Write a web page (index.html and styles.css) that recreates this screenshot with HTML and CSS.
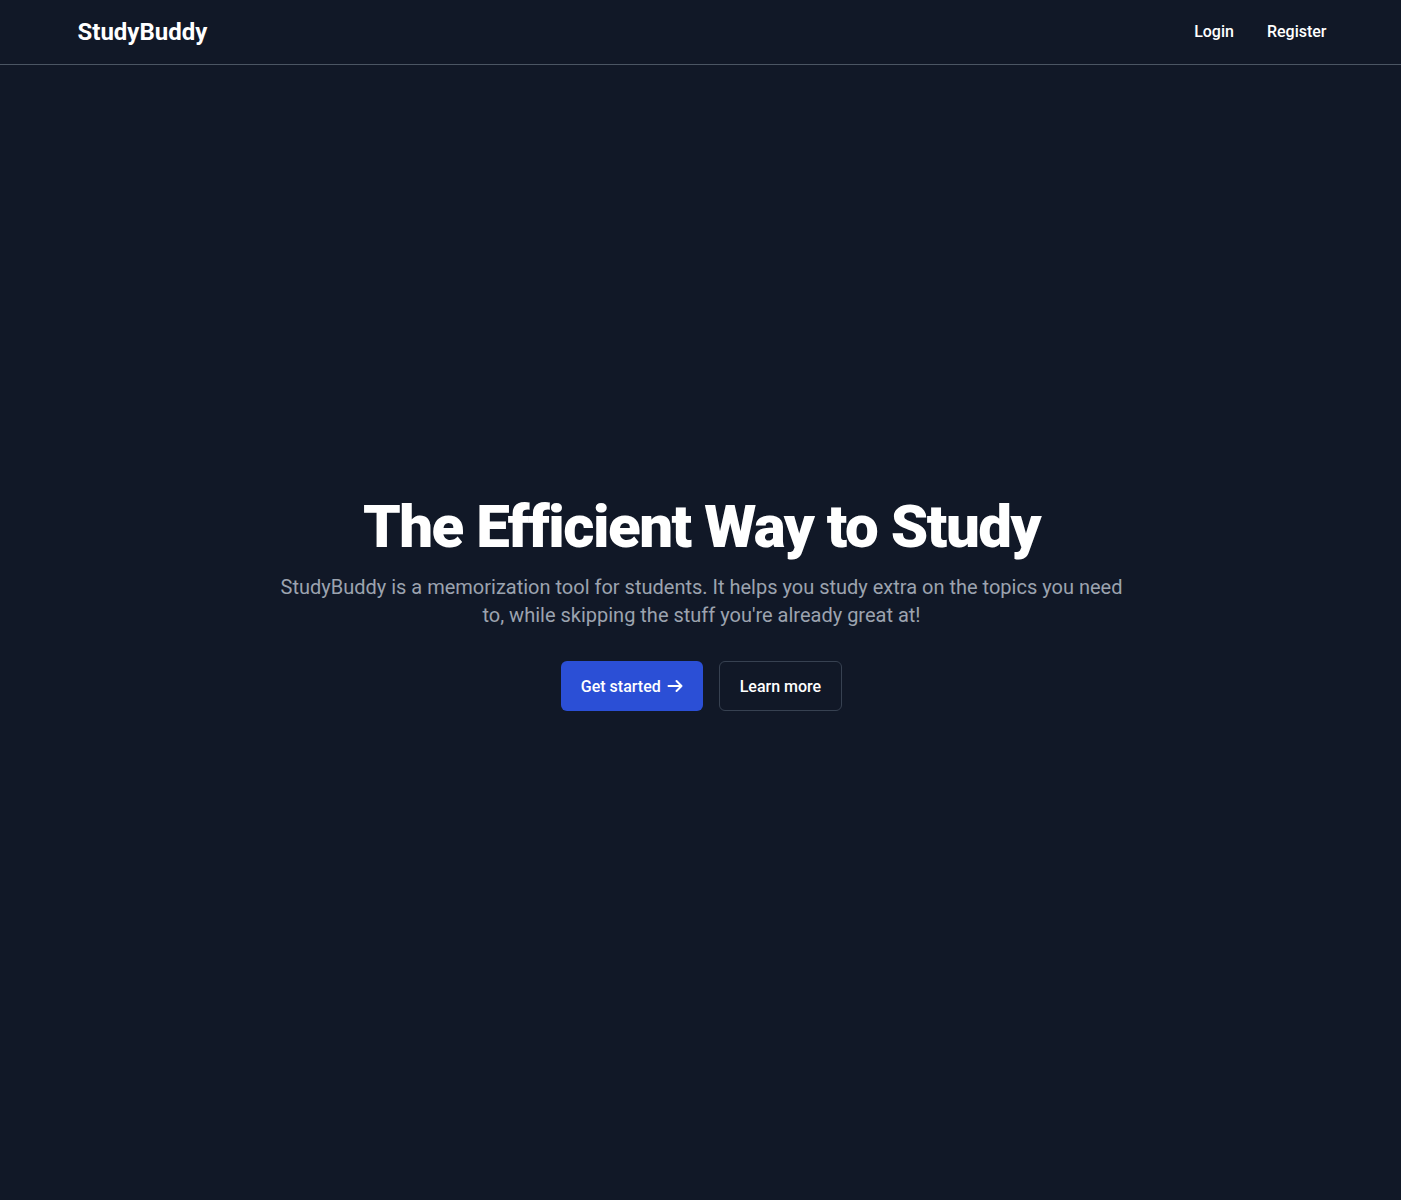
FILE: index.html
```html
<!DOCTYPE html>
<html lang="en">
<head>
<meta charset="utf-8">
<title>StudyBuddy</title>
<link rel="stylesheet" href="styles.css">
</head>
<body>
<header class="navbar">
  <div class="nav-inner">
    <a class="logo" href="#">StudyBuddy</a>
    <nav class="nav-links">
      <a href="#">Login</a>
      <a href="#">Register</a>
    </nav>
  </div>
</header>
<main class="hero">
  <h1 class="hero-title">The Efficient Way to Study</h1>
  <p class="hero-text">StudyBuddy is a memorization tool for students. It helps you study extra on the topics you need to, while skipping the stuff you're already great at!</p>
  <div class="hero-actions">
    <a class="btn btn-primary" href="#">Get started
      <svg class="arrow" width="16" height="16" viewBox="0 0 16 16" fill="none" stroke="currentColor" stroke-width="2" stroke-linecap="round" stroke-linejoin="round"><path d="M1.5 8h13M9.5 3 14.5 8 9.5 13"/></svg>
    </a>
    <a class="btn btn-outline" href="#">Learn more</a>
  </div>
</main>
</body>
</html>
```
FILE: styles.css
```css
* { box-sizing: border-box; }
html, body { margin: 0; padding: 0; }
body {
  background: #111827;
  color: #ffffff;
  font-family: Roboto, "Liberation Sans", Arial, sans-serif;
  min-height: 1200px;
}
a { color: inherit; text-decoration: none; }
.navbar {
  height: 65px;
  border-bottom: 1px solid #4b5563;
}
.nav-inner {
  max-width: 1280px;
  margin: 0 auto;
  height: 63px;
  padding: 0 14px 0 17px;
  display: flex;
  align-items: center;
  justify-content: space-between;
}
.logo {
  font-size: 24px;
  font-weight: 700;
}
.nav-links {
  display: flex;
  gap: 33px;
  font-size: 16px;
  font-weight: 500;
}
.hero {
  padding: 432px 0 0 2px;
  display: flex;
  flex-direction: column;
  align-items: center;
  text-align: center;
}
.hero-title {
  margin: 0;
  font-size: 60px;
  line-height: 60px;
  font-weight: 900;
  letter-spacing: -1.5px;
}
.hero-text {
  margin: 16px 0 0;
  max-width: 852px;
  font-size: 20px;
  line-height: 28px;
  color: #9ca3af;
}
.hero-actions {
  margin-top: 32px;
  display: flex;
  gap: 16px;
}
.btn {
  display: inline-flex;
  align-items: center;
  height: 50px;
  padding: 0 20px;
  border-radius: 6px;
  font-size: 16px;
  font-weight: 500;
}
.btn-primary {
  gap: 6px;
  background: #2b4fd6;
}
.btn-outline {
  border: 1px solid #374151;
}
.arrow { display: block; }
```
